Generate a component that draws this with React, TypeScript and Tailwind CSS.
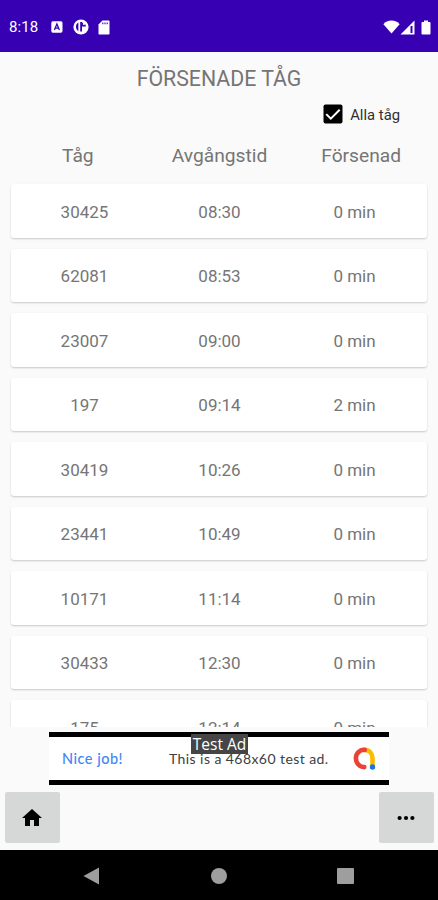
const trains = [
  { id: "30425", time: "08:30", delay: "0 min" },
  { id: "62081", time: "08:53", delay: "0 min" },
  { id: "23007", time: "09:00", delay: "0 min" },
  { id: "197", time: "09:14", delay: "2 min" },
  { id: "30419", time: "10:26", delay: "0 min" },
  { id: "23441", time: "10:49", delay: "0 min" },
  { id: "10171", time: "11:14", delay: "0 min" },
  { id: "30433", time: "12:30", delay: "0 min" },
  { id: "175", time: "12:14", delay: "0 min" },
];

function StatusBar() {
  return (
    <header className="flex h-[52px] shrink-0 items-center bg-[#3700b3] pt-[2px] pr-[7px] pl-[9px] text-white">
      <span className="w-[42px] text-[15px] leading-5 tracking-[0.1px]">8:18</span>
      <svg className="h-[12px] w-[12px]" viewBox="0 0 12 12">
        <rect x="0.3" y="0.3" width="11.2" height="11.4" rx="1.6" fill="white" />
        <path d="M3.4 9 5.9 3 8.4 9M4.4 7.2H7.4" fill="none" stroke="#3700b3" strokeWidth="1.3" />
      </svg>
      <svg className="ml-[10px] h-4 w-4" viewBox="0 0 16 16">
        <circle cx="8" cy="8" r="7.6" fill="white" />
        <path d="M5.4 3.4A5.2 5.2 0 0 0 5.4 12.2Z" fill="#3700b3" />
        <path d="M7.2 3H9v9.6H7.2Z" fill="#3700b3" />
        <path d="M9 3.6A5 5 0 0 1 13 7.4H9Z" fill="#3700b3" />
        <circle cx="10.9" cy="4.9" r="1.1" fill="white" />
      </svg>
      <svg className="ml-[9px] h-[15px] w-[12px]" viewBox="0 0 12 15">
        <path d="M4.4.5h6.1c.6 0 1 .4 1 1v12c0 .6-.4 1-1 1h-9c-.6 0-1-.4-1-1v-9Z" fill="white" />
        <path d="M4.8 2.4v1.9M7 2.4v1.9M9.2 2.4v1.9" stroke="#3700b3" strokeWidth="1.1" />
      </svg>
      <svg className="ml-auto h-[14px] w-[17px]" viewBox="0 0 17 14">
        <path d="M.4 4.2C2.3 1.7 5.1.5 8.5.5s6.2 1.2 8.1 3.7L8.5 13.5Z" fill="white" />
      </svg>
      <svg className="h-[15px] w-[15px]" viewBox="0 0 15 15">
        <path d="M.5 14.5 14.5.5v14Z" fill="white" />
        <path d="M10.5 6h2v7h-2Z" fill="#3700b3" />
      </svg>
      <svg className="ml-[6px] h-[15px] w-[10px]" viewBox="0 0 10 15">
        <path d="M3 .5h4V2h1.5c.6 0 1 .4 1 1v10.5c0 .6-.4 1-1 1h-7c-.6 0-1-.4-1-1V3c0-.6.4-1 1-1H3Z" fill="white" />
      </svg>
    </header>
  );
}

function AdBanner() {
  return (
    <div className="relative mx-auto mt-[5px] flex h-[53px] w-[340px] shrink-0 items-center border-y-[5px] border-black bg-white pr-[13px] pl-[13px] font-[Lato,sans-serif] text-[14px]">
      <span className="w-[107px] text-[14.5px] font-medium tracking-[0.5px] text-[#4285f4]">Nice job!</span>
      <span className="tracking-[0.43px] whitespace-nowrap text-[#3c4043]">This is a 468x60 test ad.</span>
      <svg className="ml-auto h-[23px] w-[23px] shrink-0" viewBox="0 0 23 23" fill="none" strokeWidth="4.6" strokeLinecap="round">
        <path d="M11.5 2.9c4.8 0 8 3.5 8 8.3v8.6" stroke="#fbbc04" />
        <path d="M11.8 2.9C6.6 2.2 2.9 6.6 2.9 11.2c0 5 3.7 8.9 8.4 8.9" stroke="#ea4335" />
        <circle cx="19.5" cy="20" r="2.7" fill="#1a73e8" />
      </svg>
      <span className="absolute -top-[3px] left-[142px] h-[20px] w-[57px] bg-[#454545] text-center font-[Open_Sans,sans-serif] text-[15.5px] leading-[20px] whitespace-nowrap text-white">
        Test Ad
      </span>
    </div>
  );
}

export default function App() {
  return (
    <div className="flex h-[900px] w-[438px] flex-col overflow-hidden bg-[#fafafa] font-[Roboto,sans-serif] text-[#757575]">
      <StatusBar />
      <h1 className="mt-[13px] h-[28px] shrink-0 text-center text-[21.3px] leading-[28px]">FÖRSENADE TÅG</h1>
      <label className="mt-[10px] flex h-[22px] shrink-0 items-center gap-[7px] self-end pr-[38px] text-[14.8px] text-[#303030]">
        <svg className="h-[20px] w-[20px]" viewBox="0 0 20 20">
          <rect x="0.5" y="0.5" width="19" height="19" rx="2" fill="black" />
          <path d="m3.2 10.1 4.6 4.6 8.9-9" fill="none" stroke="white" strokeWidth="2" />
        </svg>
        <span className="pt-[2px]">Alla tåg</span>
      </label>
      <div className="mx-[6px] mt-[18px] grid h-[27px] shrink-0 grid-cols-3 pl-px text-center text-[19.2px] leading-[26px]">
        <span>Tåg</span>
        <span>Avgångstid</span>
        <span>Försenad</span>
      </div>
      <main className="flex h-[557px] shrink-0 flex-col gap-[11px] overflow-hidden px-[11px] pt-[14px]">
        {trains.map((train) => (
          <div
            key={train.id}
            className="grid h-[53.5px] shrink-0 grid-cols-3 items-center rounded-[3px] bg-white pt-[3px] pr-[5px] pl-[6px] text-center text-[17px] shadow-[0_1px_2px_rgba(0,0,0,0.2)]"
          >
            <span>{train.id}</span>
            <span>{train.time}</span>
            <span>{train.delay}</span>
          </div>
        ))}
      </main>
      <AdBanner />
      <div className="mt-[7px] flex h-[58px] shrink-0 justify-between pr-[4px] pl-[5px]">
        <button className="flex h-[51px] w-[55px] items-center justify-center rounded-[2px] bg-[#d6d7d7] pr-px" aria-label="Hem">
          <svg className="h-[24px] w-[24px]" viewBox="0 0 24 24">
            <path d="M10 20v-6h4v6h5v-8h3L12 3 2 12h3v8z" fill="black" />
          </svg>
        </button>
        <button className="flex h-[51px] w-[55px] items-center justify-center rounded-[2px] bg-[#d6d7d7] pr-px" aria-label="Mer">
          <svg className="h-[6px] w-[20px]" viewBox="0 0 20 6">
            <circle cx="3.6" cy="3" r="2.1" />
            <circle cx="10" cy="3" r="2.1" />
            <circle cx="16.4" cy="3" r="2.1" />
          </svg>
        </button>
      </div>
      <nav className="flex h-[51px] shrink-0 items-center justify-between bg-black pr-[84px] pl-[83px]">
        <svg className="h-[18px] w-[17px]" viewBox="0 0 17 18">
          <path d="M16 .5v17L.5 9Z" fill="#9e9e9e" />
        </svg>
        <span className="h-4 w-4 rounded-full bg-[#9e9e9e]" />
        <span className="h-4 w-[17px] rounded-[1px] bg-[#9e9e9e]" />
      </nav>
    </div>
  );
}
